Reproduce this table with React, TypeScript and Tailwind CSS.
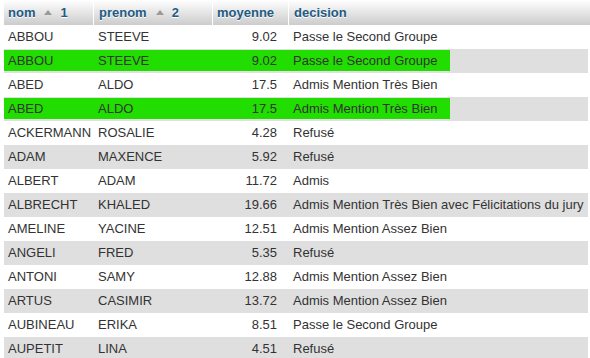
const rows: { nom: string; prenom: string; moyenne: string; decision: string; marked?: boolean }[] = [
  { nom: "ABBOU", prenom: "STEEVE", moyenne: "9.02", decision: "Passe le Second Groupe" },
  { nom: "ABBOU", prenom: "STEEVE", moyenne: "9.02", decision: "Passe le Second Groupe", marked: true },
  { nom: "ABED", prenom: "ALDO", moyenne: "17.5", decision: "Admis Mention Très Bien" },
  { nom: "ABED", prenom: "ALDO", moyenne: "17.5", decision: "Admis Mention Très Bien", marked: true },
  { nom: "ACKERMANN", prenom: "ROSALIE", moyenne: "4.28", decision: "Refusé" },
  { nom: "ADAM", prenom: "MAXENCE", moyenne: "5.92", decision: "Refusé" },
  { nom: "ALBERT", prenom: "ADAM", moyenne: "11.72", decision: "Admis" },
  { nom: "ALBRECHT", prenom: "KHALED", moyenne: "19.66", decision: "Admis Mention Très Bien avec Félicitations du jury" },
  { nom: "AMELINE", prenom: "YACINE", moyenne: "12.51", decision: "Admis Mention Assez Bien" },
  { nom: "ANGELI", prenom: "FRED", moyenne: "5.35", decision: "Refusé" },
  { nom: "ANTONI", prenom: "SAMY", moyenne: "12.88", decision: "Admis Mention Assez Bien" },
  { nom: "ARTUS", prenom: "CASIMIR", moyenne: "13.72", decision: "Admis Mention Assez Bien" },
  { nom: "AUBINEAU", prenom: "ERIKA", moyenne: "8.51", decision: "Passe le Second Groupe" },
  { nom: "AUPETIT", prenom: "LINA", moyenne: "4.51", decision: "Refusé" },
];

const gridCols = "grid grid-cols-[89px_119px_76px_300px]";

function SortMark({ n }: { n: number }) {
  return (
    <>
      <span className="ml-[9px] inline-block h-0 w-0 border-x-[4px] border-b-[5px] border-x-transparent border-b-[#9a9a9a] align-[1px]" />
      <span className="ml-[8px]">{n}</span>
    </>
  );
}

function Cells({ r }: { r: (typeof rows)[number] }) {
  return (
    <>
      <div className="pl-[4px] whitespace-nowrap">{r.nom}</div>
      <div className="pl-[5px] whitespace-nowrap">{r.prenom}</div>
      <div className="pr-[11px] text-right whitespace-nowrap">{r.moyenne}</div>
      <div className="pl-[5px] whitespace-nowrap">{r.decision}</div>
    </>
  );
}

export default function App() {
  return (
    <div className="h-[358px] w-[590px] overflow-hidden bg-white pl-[4px] font-['Liberation_Sans',Arial,sans-serif] text-[13px] text-[#333]">
      <div className={`${gridCols} h-[25px] bg-gradient-to-b from-white to-[#cccccc] font-bold text-[#235a81] [text-shadow:0_1px_0_#fff]`}>
        <div className="flex items-center pl-[4px]">
          nom
          <SortMark n={1} />
        </div>
        <div className="flex items-center border-l border-white pl-[5px]">
          prenom
          <SortMark n={2} />
        </div>
        <div className="flex items-center border-l border-white pl-[4px]">moyenne</div>
        <div className="flex items-center border-l border-white pl-[5px]">decision</div>
      </div>
      {rows.map((r, i) => {
        const even = i % 2 === 1;
        if (r.marked) {
          return (
            <div key={i} className="h-[24px] w-[584px] bg-[#dfdfdf] pt-px">
              <div className={`${gridCols} h-[21px] w-[446px] items-center bg-[#22dd00]`}>
                <Cells r={r} />
              </div>
            </div>
          );
        }
        return (
          <div
            key={i}
            className={`${gridCols} h-[24px] w-[584px] items-center ${even ? "bg-[#dfdfdf]" : "bg-white"}`}
          >
            <Cells r={r} />
          </div>
        );
      })}
    </div>
  );
}
